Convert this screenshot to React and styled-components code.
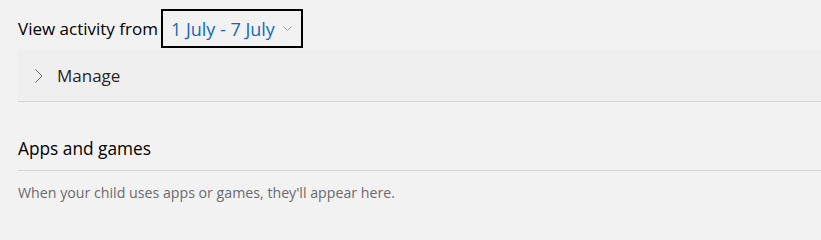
import React from 'react';
import styled, { createGlobalStyle } from 'styled-components';

const GlobalStyle = createGlobalStyle`
  html, body {
    margin: 0;
    padding: 0;
    background: #f2f2f2;
  }
  body {
    font-family: 'Open Sans', 'Noto Sans', sans-serif;
    color: #000;
  }
`;

const Page = styled.div`
  width: 821px;
  height: 232px;
  padding: 9px 0 0 18px;
  box-sizing: border-box;
  overflow: hidden;
`;

const FilterRow = styled.div`
  display: flex;
  align-items: center;
`;

const FilterLabel = styled.span`
  font-size: 17px;
  line-height: 24px;
  color: #000;
  margin-right: 3px;
`;

const DateButton = styled.button`
  display: flex;
  align-items: center;
  gap: 8px;
  height: 39px;
  padding: 0 9px 0 8px;
  border: 2px solid #000;
  background: transparent;
  font-family: inherit;
  font-size: 18px;
  color: #1469b8;
  cursor: pointer;
`;

const Panel = styled.div`
  display: flex;
  align-items: center;
  gap: 14px;
  height: 51px;
  margin-top: 2px;
  padding-left: 17px;
  background: #efefef;
  border-bottom: 1px solid #d6d6d6;
`;

const PanelTitle = styled.span`
  font-size: 17px;
  color: #262626;
`;

const Section = styled.section`
  margin-top: 35px;
`;

const SectionTitle = styled.h2`
  margin: 0;
  padding-bottom: 9px;
  font-size: 17.3px;
  line-height: 24px;
  font-weight: 400;
  color: #000;
  border-bottom: 1px solid #d6d6d6;
`;

const Hint = styled.p`
  margin: 12px 0 0;
  font-size: 14.2px;
  line-height: 20px;
  color: #6b6b6b;
`;

const ChevronDown = () => (
  <svg width="9" height="5" viewBox="0 0 9 5" fill="none">
    <path d="M0.5 0.5 L4.5 4.5 L8.5 0.5" stroke="#999" strokeWidth="1" />
  </svg>
);

const ChevronRight = () => (
  <svg width="8" height="14" viewBox="0 0 8 14" fill="none">
    <path d="M0.5 0.5 L7 7 L0.5 13.5" stroke="#6e6e6e" strokeWidth="1" />
  </svg>
);

export default function App() {
  return (
    <>
      <GlobalStyle />
      <Page>
        <FilterRow>
          <FilterLabel>View activity from</FilterLabel>
          <DateButton>
            1 July - 7 July
            <ChevronDown />
          </DateButton>
        </FilterRow>
        <Panel>
          <ChevronRight />
          <PanelTitle>Manage</PanelTitle>
        </Panel>
        <Section>
          <SectionTitle>Apps and games</SectionTitle>
          <Hint>When your child uses apps or games, they'll appear here.</Hint>
        </Section>
      </Page>
    </>
  );
}
